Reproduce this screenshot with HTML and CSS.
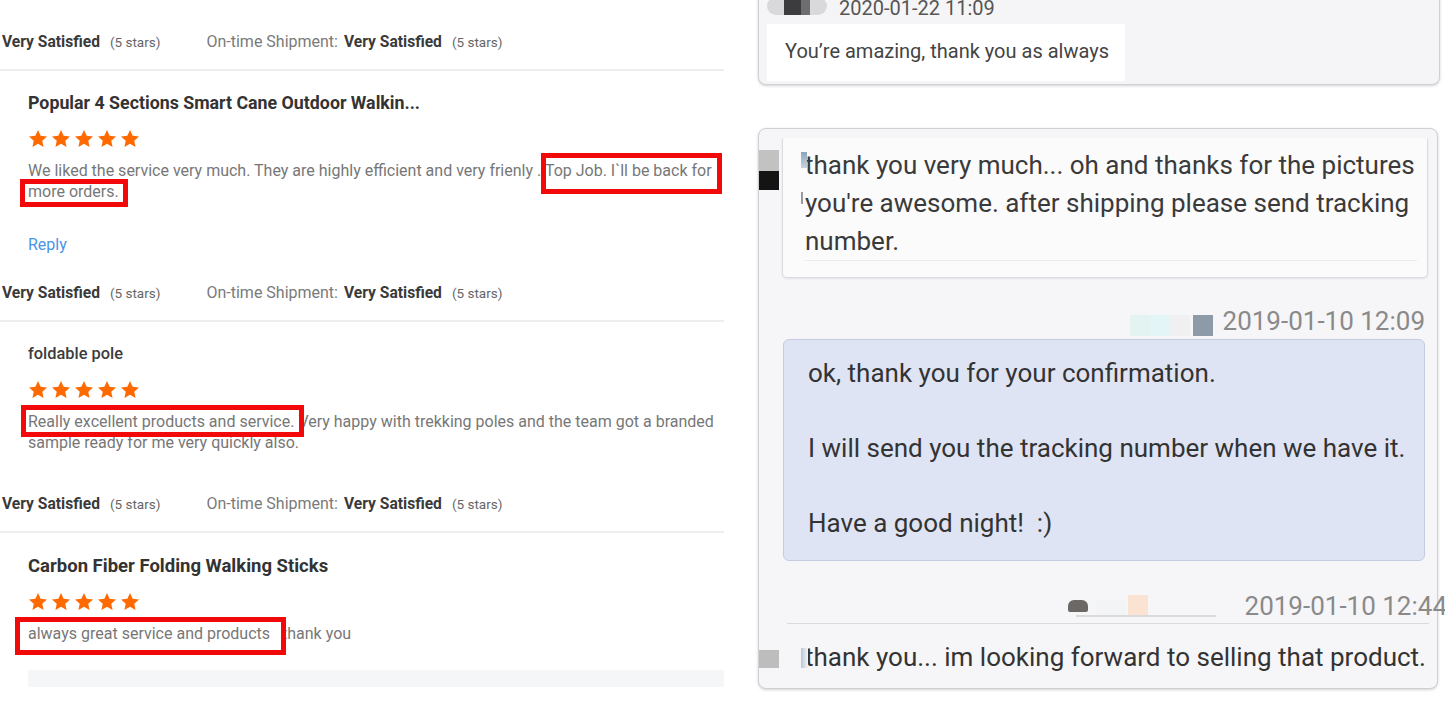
FILE: index.html
```html
<!DOCTYPE html>
<html lang="en">
<head>
<meta charset="utf-8">
<title>Reviews and chat</title>
<link rel="stylesheet" href="styles.css">
</head>
<body>
<main class="page">
  <section class="reviews">
    <article class="review review-1">
      <div class="rating-row">
        <b class="level">Very Satisfied</b><span class="note">(5 stars)</span>
        <span class="label">On-time Shipment:</span><b class="level">Very Satisfied</b><span class="note">(5 stars)</span>
      </div>
      <div class="review-body">
        <h3 class="product product-1">Popular 4 Sections Smart Cane Outdoor Walkin...</h3>
        <div class="stars">
          <svg viewBox="0 0 24 24"><path d="M12 1.2l3.2 7 7.6.8-5.7 5.1 1.6 7.5L12 17.8l-6.7 3.8 1.6-7.5L1.2 9l7.6-.8z"/></svg>
          <svg viewBox="0 0 24 24"><path d="M12 1.2l3.2 7 7.6.8-5.7 5.1 1.6 7.5L12 17.8l-6.7 3.8 1.6-7.5L1.2 9l7.6-.8z"/></svg>
          <svg viewBox="0 0 24 24"><path d="M12 1.2l3.2 7 7.6.8-5.7 5.1 1.6 7.5L12 17.8l-6.7 3.8 1.6-7.5L1.2 9l7.6-.8z"/></svg>
          <svg viewBox="0 0 24 24"><path d="M12 1.2l3.2 7 7.6.8-5.7 5.1 1.6 7.5L12 17.8l-6.7 3.8 1.6-7.5L1.2 9l7.6-.8z"/></svg>
          <svg viewBox="0 0 24 24"><path d="M12 1.2l3.2 7 7.6.8-5.7 5.1 1.6 7.5L12 17.8l-6.7 3.8 1.6-7.5L1.2 9l7.6-.8z"/></svg>
        </div>
        <p class="comment">We liked the service very much. They are highly efficient and very frienly . Top Job. I`ll be back for<br>more orders.<span class="mark mark-1"></span><span class="mark mark-2"></span></p>
        <a class="reply">Reply</a>
      </div>
    </article>

    <article class="review review-2">
      <div class="rating-row">
        <b class="level">Very Satisfied</b><span class="note">(5 stars)</span>
        <span class="label">On-time Shipment:</span><b class="level">Very Satisfied</b><span class="note">(5 stars)</span>
      </div>
      <div class="review-body">
        <h3 class="product product-plain">foldable pole</h3>
        <div class="stars">
          <svg viewBox="0 0 24 24"><path d="M12 1.2l3.2 7 7.6.8-5.7 5.1 1.6 7.5L12 17.8l-6.7 3.8 1.6-7.5L1.2 9l7.6-.8z"/></svg>
          <svg viewBox="0 0 24 24"><path d="M12 1.2l3.2 7 7.6.8-5.7 5.1 1.6 7.5L12 17.8l-6.7 3.8 1.6-7.5L1.2 9l7.6-.8z"/></svg>
          <svg viewBox="0 0 24 24"><path d="M12 1.2l3.2 7 7.6.8-5.7 5.1 1.6 7.5L12 17.8l-6.7 3.8 1.6-7.5L1.2 9l7.6-.8z"/></svg>
          <svg viewBox="0 0 24 24"><path d="M12 1.2l3.2 7 7.6.8-5.7 5.1 1.6 7.5L12 17.8l-6.7 3.8 1.6-7.5L1.2 9l7.6-.8z"/></svg>
          <svg viewBox="0 0 24 24"><path d="M12 1.2l3.2 7 7.6.8-5.7 5.1 1.6 7.5L12 17.8l-6.7 3.8 1.6-7.5L1.2 9l7.6-.8z"/></svg>
        </div>
        <p class="comment">Really excellent products and service. Very happy with trekking poles and the team got a branded<br>sample ready for me very quickly also.<span class="mark mark-3"></span></p>
      </div>
    </article>

    <article class="review review-3">
      <div class="rating-row">
        <b class="level">Very Satisfied</b><span class="note">(5 stars)</span>
        <span class="label">On-time Shipment:</span><b class="level">Very Satisfied</b><span class="note">(5 stars)</span>
      </div>
      <div class="review-body">
        <h3 class="product product-3">Carbon Fiber Folding Walking Sticks</h3>
        <div class="stars">
          <svg viewBox="0 0 24 24"><path d="M12 1.2l3.2 7 7.6.8-5.7 5.1 1.6 7.5L12 17.8l-6.7 3.8 1.6-7.5L1.2 9l7.6-.8z"/></svg>
          <svg viewBox="0 0 24 24"><path d="M12 1.2l3.2 7 7.6.8-5.7 5.1 1.6 7.5L12 17.8l-6.7 3.8 1.6-7.5L1.2 9l7.6-.8z"/></svg>
          <svg viewBox="0 0 24 24"><path d="M12 1.2l3.2 7 7.6.8-5.7 5.1 1.6 7.5L12 17.8l-6.7 3.8 1.6-7.5L1.2 9l7.6-.8z"/></svg>
          <svg viewBox="0 0 24 24"><path d="M12 1.2l3.2 7 7.6.8-5.7 5.1 1.6 7.5L12 17.8l-6.7 3.8 1.6-7.5L1.2 9l7.6-.8z"/></svg>
          <svg viewBox="0 0 24 24"><path d="M12 1.2l3.2 7 7.6.8-5.7 5.1 1.6 7.5L12 17.8l-6.7 3.8 1.6-7.5L1.2 9l7.6-.8z"/></svg>
        </div>
        <p class="comment">always great service and products <span class="after-mark">thank you</span><span class="mark mark-4"></span></p>
        <div class="more-bar"></div>
      </div>
    </article>
  </section>

  <section class="chat">
    <div class="panel panel-top">
      <div class="meta">
        <span class="avatar-blur"><i class="blk blk-a"></i><i class="blk blk-b"></i></span>
        <span class="time time-dark">2020-01-22 11:09</span>
      </div>
      <div class="bubble bubble-white">You’re amazing, thank you as always</div>
    </div>

    <div class="panel panel-main">
      <div class="bubble bubble-in">
        <p class="msg">thank you very much... oh and thanks for the pictures<br>you're awesome. after shipping please send tracking<br>number.</p>
      </div>

      <div class="meta meta-right">
        <span class="blurs">
          <i class="pix pix-c1"></i><i class="pix pix-c2"></i><i class="pix pix-c3"></i><i class="pix pix-gap"></i><i class="pix pix-c4"></i>
        </span>
        <span class="time">2019-01-10 12:09</span>
      </div>

      <div class="bubble bubble-blue">
        ok, thank you for your confirmation.<br><br>I will send you the tracking number when we have it.<br><br>Have a good night! &nbsp;:)
      </div>

      <div class="meta meta-right meta-over">
        <span class="name-blur"><i class="nb nb-dark"></i><i class="nb nb-light"></i><i class="nb nb-peach"></i><i class="nb nb-line"></i></span>
        <span class="time">2019-01-10 12:44</span>
      </div>

      <div class="last-msg">thank you... im looking forward to selling that product.</div>

      <span class="deco deco-gray"></span>
      <span class="deco deco-black"></span>
      <span class="deco deco-tick"></span>
      <span class="deco deco-tick2"></span>
      <span class="deco deco-gray2"></span>
      <span class="deco deco-tick3"></span>
    </div>
  </section>
</main>
</body>
</html>
```

FILE: styles.css
```css
html, body {
  margin: 0;
  padding: 0;
  background: #ffffff;
  overflow: hidden;
}

.page {
  display: grid;
  grid-template-columns: 724px 682px;
  column-gap: 34px;
  width: 1445px;
  height: 722px;
  font-family: Roboto, "Liberation Sans", Arial, sans-serif;
}

/* ---------- reviews ---------- */
.reviews {
  padding-top: 32px;
}

.rating-row {
  display: flex;
  align-items: baseline;
  height: 20px;
  line-height: 20px;
  padding-left: 2px;
  padding-bottom: 17px;
  border-bottom: 2px solid #eeeeee;
  font-size: 16px;
  white-space: nowrap;
}

.rating-row .level {
  font-weight: 700;
  color: #3a3a3a;
  font-size: 15.6px;
}

.rating-row .note {
  font-size: 13.5px;
  color: #666;
  margin-left: 10px;
}

.rating-row .label {
  color: #7a7a7a;
  margin-left: 46px;
  margin-right: 6px;
}

.review-body {
  padding-left: 28px;
  padding-top: 22px;
}

.review-3 .review-body {
  padding-top: 23px;
}

.product {
  margin: 0;
  font-weight: 700;
  line-height: 20px;
  color: #333;
  white-space: nowrap;
}

.product-1 {
  font-size: 17.8px;
}

.product-3 {
  font-size: 18.5px;
}

.product-plain {
  font-weight: 500;
  font-size: 16.4px;
  color: #3c3c3c;
}

.stars {
  display: flex;
  gap: 3px;
  margin-top: 16px;
  height: 20px;
}

.stars svg {
  width: 20px;
  height: 20px;
  fill: #ff6a00;
}

.comment {
  position: relative;
  margin: 11px 0 0;
  font-size: 16px;
  line-height: 21px;
  color: #777;
  white-space: nowrap;
}

.after-mark {
  margin-left: 8px;
}

.mark {
  position: absolute;
  border: 5px solid #f20a0a;
  box-sizing: border-box;
}

.mark-1 { left: 513px; top: -7px; width: 181px; height: 41px; }
.mark-2 { left: -8px; top: 19px; width: 108px; height: 28px; }
.mark-3 { left: -7px; top: -6px; width: 283px; height: 32px; }
.mark-4 { left: -13px; top: -6px; width: 271px; height: 38px; }

.reply {
  display: block;
  margin-top: 33px;
  margin-bottom: 28px;
  font-size: 16px;
  line-height: 20px;
  color: #4a94e6;
}

.review-2 .comment {
  margin-bottom: 41px;
}

.more-bar {
  margin-top: 26px;
  height: 17px;
  background: #f5f6f8;
  border-radius: 2px;
}

/* ---------- chat ---------- */
.chat {
  display: flex;
  flex-direction: column;
  color: #3a3a3a;
}

.panel {
  position: relative;
  background: #f5f5f7;
  border: 1px solid #cfd0d4;
  border-radius: 8px;
  box-shadow: 0 1px 3px rgba(0, 0, 0, 0.18);
}

.panel-top {
  margin-top: -5px;
  padding: 0 0 3px 8px;
  border-top: none;
  border-radius: 0 0 8px 8px;
}

.meta {
  display: flex;
  align-items: center;
  height: 26px;
}

.avatar-blur {
  display: flex;
  width: 60px;
  height: 18px;
  margin-top: -4px;
  background: #d9d9db;
  border-radius: 9px;
  overflow: hidden;
  filter: blur(0.6px);
}

.blk { display: block; height: 18px; }
.blk-a { width: 17px; margin-left: 17px; background: #3c3c3e; }
.blk-b { width: 9px; background: #6e6e70; }

.time {
  font-size: 20px;
  color: #8a8a8a;
  white-space: nowrap;
}

.time-dark {
  margin-left: 12px;
  color: #555;
  font-size: 20px;
}

.bubble-white {
  align-self: flex-start;
  margin-top: 3px;
  width: 358px;
  box-sizing: border-box;
  padding: 14px 0 16px 18px;
  background: #ffffff;
  font-size: 20px;
  line-height: 27px;
  color: #444;
  white-space: nowrap;
}

.panel-main {
  margin-top: 43px;
  margin-right: 2px;
  height: 561px;
  box-sizing: border-box;
  padding-top: 9px;
  display: flex;
  flex-direction: column;
  background: #f6f6f8;
}

.bubble-in {
  margin: 0 9px 0 23px;
  padding: 0 10px 16px 22px;
  background: #fbfbfc;
  border: 1px solid #dcdce0;
  border-top-color: transparent;
  border-radius: 0 0 5px 5px;
  box-shadow: 0 1px 2px rgba(0, 0, 0, 0.08);
}

.msg {
  margin: 0;
  padding-top: 7px;
  font-size: 26px;
  line-height: 38px;
  color: #3a3a3a;
  white-space: nowrap;
  border-bottom: 1px solid #ececee;
}

.meta-right {
  justify-content: flex-end;
  height: 30px;
  margin-top: 28px;
  margin-right: 12px;
}

.meta-right .time {
  font-size: 26px;
  line-height: 30px;
}

.blurs {
  display: flex;
  align-items: flex-end;
  height: 22px;
  margin-right: 10px;
  margin-top: 8px;
}

.pix { display: block; width: 20px; height: 21px; }
.pix-c1 { background: #e3f3f1; }
.pix-c2 { background: #e4f5f8; }
.pix-c3 { background: #f0f0f0; }
.pix-gap { width: 3px; background: transparent; }
.pix-c4 { background: #8d9aa8; }

.bubble-blue {
  margin: 3px 12px 0 24px;
  padding: 15px 16px 17px 24px;
  background: #dfe4f4;
  border: 1px solid #c4cbe0;
  border-radius: 6px;
  font-size: 26px;
  line-height: 37.5px;
  color: #333;
  white-space: nowrap;
}

.meta-over {
  margin-top: 30px;
  margin-right: -10px;
}

.name-blur {
  display: flex;
  align-items: center;
  height: 26px;
  margin-right: 22px;
  position: relative;
  width: 155px;
}

.nb { display: block; position: absolute; }
.nb-dark { left: 0; top: 7px; width: 20px; height: 12px; background: #6b6866; border-radius: 6px 6px 2px 2px; }
.nb-light { left: 28px; top: 6px; width: 30px; height: 16px; background: #f2f4f6; }
.nb-peach { left: 60px; top: 2px; width: 20px; height: 20px; background: #fbe3d3; }
.nb-line { left: 8px; top: 22px; width: 140px; height: 2px; background: #cfcfcf; opacity: .7; }

.last-msg {
  margin: 2px 8px 0 28px;
  padding: 14px 0 11px 18px;
  border-top: 1px solid #dadadd;
  font-size: 26px;
  line-height: 38px;
  color: #333;
  white-space: nowrap;
}

/* blurred avatar fragments on the conversation edge */
.deco { position: absolute; display: block; }
.deco-gray { left: 0; top: 21px; width: 20px; height: 21px; background: #c2c2c2; }
.deco-black { left: 0; top: 42px; width: 20px; height: 19px; background: #141414; }
.deco-tick { left: 42px; top: 23px; width: 6px; height: 16px; background: linear-gradient(#8ea6ba, #c8d4de); }
.deco-tick2 { left: 42px; top: 63px; width: 2px; height: 12px; background: #9a9a9a; }
.deco-gray2 { left: 0; top: 521px; width: 20px; height: 18px; background: #bdbdbd; }
.deco-tick3 { left: 42px; top: 519px; width: 7px; height: 20px; background: linear-gradient(90deg, #b8c8d6, #f5f5f7); }
```
